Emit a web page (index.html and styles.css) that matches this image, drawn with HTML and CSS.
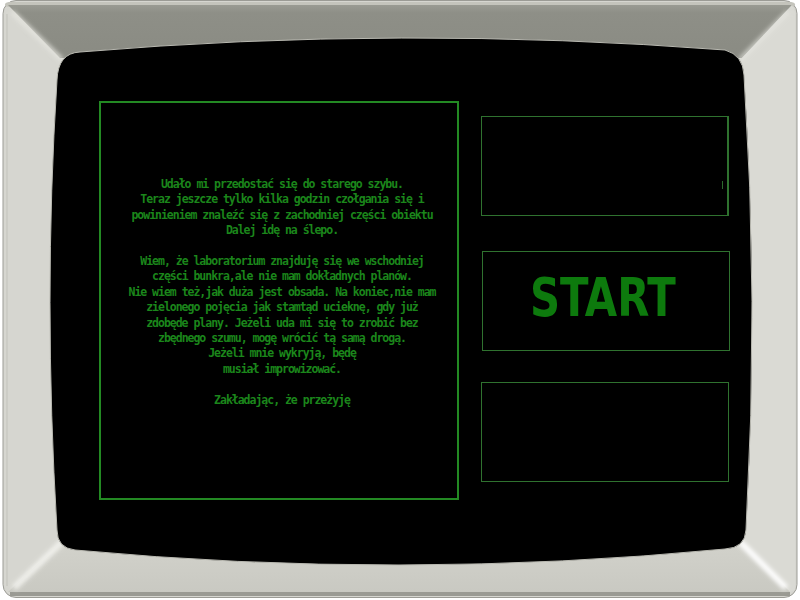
FILE: index.html
```html
<!DOCTYPE html>
<html lang="pl">
<head>
<meta charset="utf-8">
<title>Terminal</title>
<link rel="stylesheet" href="styles.css">
</head>
<body>
<div class="monitor">
  <svg class="bezel" width="800" height="600" viewBox="0 0 800 600" xmlns="http://www.w3.org/2000/svg">
    <defs>
      <linearGradient id="topg" x1="0" y1="0" x2="0" y2="1">
        <stop offset="0" stop-color="#9a9b93"/>
        <stop offset="0.15" stop-color="#8e8f87"/>
        <stop offset="1" stop-color="#8a8b83"/>
      </linearGradient>
      <linearGradient id="botg" x1="0" y1="0" x2="0" y2="1">
        <stop offset="0" stop-color="#d2d2cb"/>
        <stop offset="1" stop-color="#c9c9c2"/>
      </linearGradient>
      <filter id="soft" x="-20%" y="-20%" width="140%" height="140%">
        <feGaussianBlur stdDeviation="2.2"/>
      </filter>
    </defs>
    <rect x="3" y="0.5" width="794" height="597" rx="13" fill="#d6d6d0" stroke="#9b9b95"/>
    <rect x="5" y="2" width="790" height="5" rx="5" fill="#c4c4bc"/>
    <polygon points="8,5 792,5 742,58 60,58" fill="url(#topg)"/>
    <polygon points="792,5 795,12 795,590 790,592 742,543 742,58" fill="#dadad4"/>
    <polygon points="8,592 790,592 742,543 60,543" fill="url(#botg)"/>
    <rect x="10" y="592" width="780" height="4" fill="#9a9a93"/>
    <line x1="7" y1="14" x2="7" y2="586" stroke="#c2c2bb" stroke-width="1"/>
    <line x1="12" y1="12" x2="62" y2="60" stroke="#e6e6e0" stroke-width="5" filter="url(#soft)" opacity="0.8"/>
    <line x1="788" y1="12" x2="740" y2="60" stroke="#e6e6e0" stroke-width="5" filter="url(#soft)" opacity="0.7"/>
    <line x1="14" y1="588" x2="62" y2="542" stroke="#f4f4f0" stroke-width="6" filter="url(#soft)" opacity="0.9"/>
    <line x1="786" y1="588" x2="740" y2="542" stroke="#ffffff" stroke-width="6" filter="url(#soft)" opacity="1"/>
    <path d="M57,80 Q58,53 80,52 Q400,25 725,50 Q743,55 744,75 Q759,300 746,530 Q745,548 725,549 Q400,580.5 75,550 Q57,548 57,530 Q43,300 57,80 Z" fill="#000" stroke="#b9b9b1" stroke-width="1"/>
  </svg>
  <main class="screen">
    <section class="story">
      <p class="story-text">Udało mi przedostać się do starego szybu.
Teraz jeszcze tylko kilka godzin czołgania się i
powinieniem znaleźć się z zachodniej części obiektu
Dalej idę na ślepo.

Wiem, że laboratorium znajduję się we wschodniej
części bunkra,ale nie mam dokładnych planów.
Nie wiem też,jak duża jest obsada. Na koniec,nie mam
zielonego pojęcia jak stamtąd ucieknę, gdy już
zdobęde plany. Jeżeli uda mi się to zrobić bez
zbędnego szumu, mogę wrócić tą samą drogą.
Jeżeli mnie wykryją, będę
musiał improwizować.

Zakładając, że przeżyję</p>
    </section>
    <aside class="panel">
      <div class="box box-top"><span class="caret"></span></div>
      <div class="box box-start"><span class="start-label">START</span></div>
      <div class="box box-bottom"></div>
    </aside>
  </main>
</div>
</body>
</html>
```

FILE: styles.css
```css
html, body {
  margin: 0;
  padding: 0;
  background: #ffffff;
}

.monitor {
  position: relative;
  width: 800px;
  height: 600px;
  overflow: hidden;
}

.bezel {
  position: absolute;
  left: 0;
  top: 0;
  display: block;
}

.screen {
  position: relative;
  display: flex;
  align-items: flex-start;
  gap: 22px;
  padding: 101px 0 0 99px;
}

.story {
  box-sizing: border-box;
  width: 360px;
  height: 399px;
  border: 2px solid #238a23;
  padding: 74px 0 0 6px;
}

.story-text {
  margin: 0;
  white-space: pre-line;
  text-align: center;
  font-family: "DejaVu Sans Mono", "Liberation Mono", monospace;
  font-size: 11.5px;
  font-weight: bold;
  letter-spacing: -1.02px;
  line-height: 15.4px;
  color: #1b861b;
}

.panel {
  display: flex;
  flex-direction: column;
  width: 249px;
}

.box {
  box-sizing: border-box;
  width: 248px;
  height: 100px;
  border: 1px solid #2f722f;
}

.box-top {
  margin-top: 15px;
  border-right-width: 2px;
  display: flex;
  justify-content: flex-end;
  align-items: flex-start;
  padding: 64px 4px 0 0;
}

.caret {
  width: 1px;
  height: 8px;
  background: #2c6a2c;
}

.box-start {
  margin-top: 35px;
  margin-left: 1px;
  display: flex;
  align-items: center;
  justify-content: center;
  padding-right: 6px;
  padding-bottom: 6px;
}

.start-label {
  display: inline-block;
  font-family: "DejaVu Sans", "Liberation Sans", sans-serif;
  font-stretch: condensed;
  font-weight: bold;
  font-size: 54px;
  line-height: 1;
  color: #0d7a0d;
  transform: scaleX(0.86);
}

.box-bottom {
  margin-top: 31px;
}
```
